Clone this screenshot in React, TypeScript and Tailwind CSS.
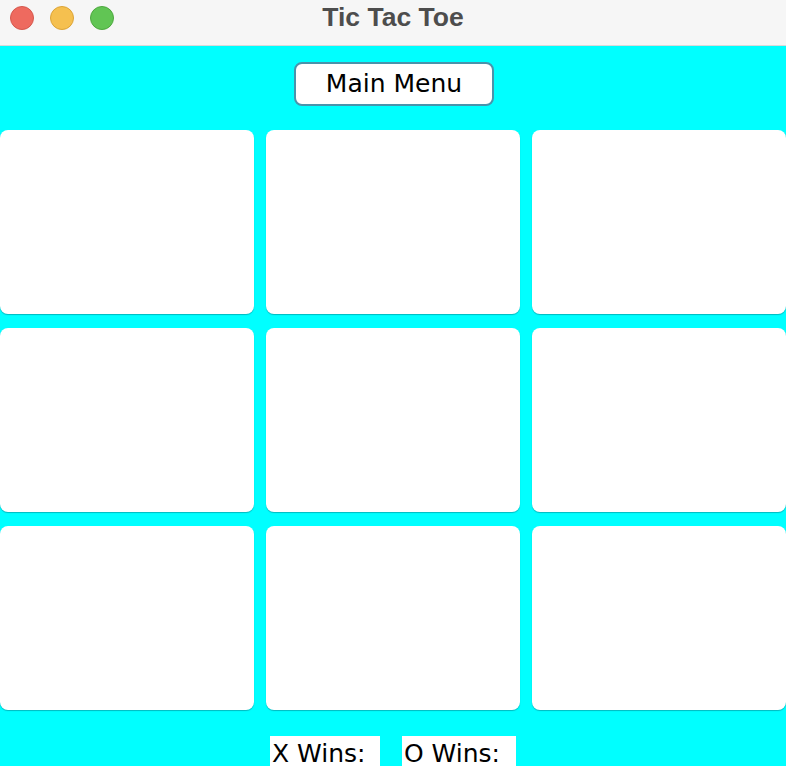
export default function App() {
  const cells = Array.from({ length: 9 }, (_, i) => i)

  return (
    <div className="w-[786px] h-[766px] overflow-hidden bg-[#00ffff] font-['DejaVu_Sans','Open_Sans',sans-serif]">
      {/* title bar */}
      <div className="relative h-[46px] bg-[#f6f6f6] border-b border-[#d9d9d9] flex items-center justify-center">
        <div className="absolute left-[10px] top-[6px] flex gap-[16px]">
          <span className="w-[24px] h-[24px] rounded-full bg-[#ee6a5f] border border-[#d5584d]" />
          <span className="w-[24px] h-[24px] rounded-full bg-[#f5c04f] border border-[#dca437]" />
          <span className="w-[24px] h-[24px] rounded-full bg-[#61c554] border border-[#4ea83f]" />
        </div>
        <span className="text-[26.5px] font-bold text-[#4d4d4d] -mt-[10px] font-['Liberation_Sans',sans-serif]">Tic Tac Toe</span>
      </div>

      <div className="flex justify-center pt-[16px] pl-[2px]">
        <button className="w-[200px] h-[44px] rounded-[8px] bg-white border-2 border-[#4a93ab] text-[25px] text-black leading-none pb-[2px] whitespace-nowrap">
          Main Menu
        </button>
      </div>

      <div className="grid grid-cols-3 gap-x-[12px] gap-y-[14px] mt-[24px]">
        {cells.map((i) => (
          <div
            key={i}
            className="h-[184px] bg-white rounded-[8px] shadow-[0_1px_1px_rgba(0,140,150,0.6)]"
          />
        ))}
      </div>

      <div className="flex justify-center gap-[22px] mt-[26px]">
        <div className="w-[110px] h-[40px] bg-white text-[25px] text-black leading-none pt-[5px] pl-[2px] whitespace-nowrap">X Wins:</div>
        <div className="w-[114px] h-[40px] bg-white text-[25px] text-black leading-none pt-[5px] pl-[2px] whitespace-nowrap">O Wins:</div>
      </div>
    </div>
  )
}
